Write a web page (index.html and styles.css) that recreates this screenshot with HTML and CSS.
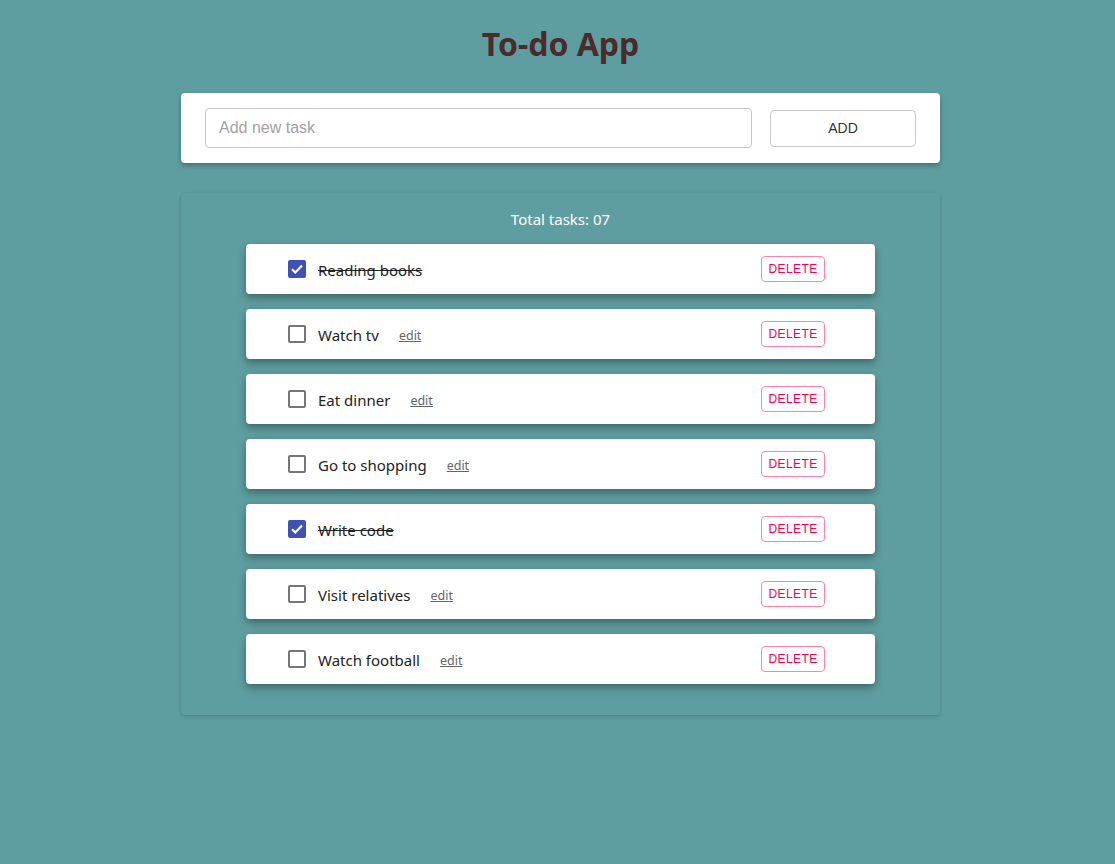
FILE: index.html
```html
<!DOCTYPE html>
<html>
<head>
<meta charset="utf-8">
<title>To-do App</title>
<link rel="stylesheet" href="styles.css">
</head>
<body>
<div class="app">
  <h1 class="title">To-do App</h1>
  <div class="add-card">
    <input class="task-input" type="text" placeholder="Add new task">
    <button class="add-btn">ADD</button>
  </div>
  <div class="list-card">
    <div class="total">Total tasks: 07</div>
    <div class="items">
      <div class="item">
        <span class="cb checked"><svg viewBox="0 0 18 18" width="18" height="18"><path d="M4 9.2l3.3 3.2L14 5.6" fill="none" stroke="#fff" stroke-width="2.2"/></svg></span>
        <span class="label done">Reading books</span>
        <button class="del-btn">DELETE</button>
      </div>
      <div class="item">
        <span class="cb"></span>
        <span class="label">Watch tv</span><a class="edit">edit</a>
        <button class="del-btn">DELETE</button>
      </div>
      <div class="item">
        <span class="cb"></span>
        <span class="label">Eat dinner</span><a class="edit">edit</a>
        <button class="del-btn">DELETE</button>
      </div>
      <div class="item">
        <span class="cb"></span>
        <span class="label">Go to shopping</span><a class="edit">edit</a>
        <button class="del-btn">DELETE</button>
      </div>
      <div class="item">
        <span class="cb checked"><svg viewBox="0 0 18 18" width="18" height="18"><path d="M4 9.2l3.3 3.2L14 5.6" fill="none" stroke="#fff" stroke-width="2.2"/></svg></span>
        <span class="label done">Write code</span>
        <button class="del-btn">DELETE</button>
      </div>
      <div class="item">
        <span class="cb"></span>
        <span class="label">Visit relatives</span><a class="edit">edit</a>
        <button class="del-btn">DELETE</button>
      </div>
      <div class="item">
        <span class="cb"></span>
        <span class="label">Watch football</span><a class="edit">edit</a>
        <button class="del-btn">DELETE</button>
      </div>
    </div>
  </div>
</div>
</body>
</html>
```

FILE: styles.css
```css
* { box-sizing: border-box; }
html, body { margin: 0; padding: 0; }
body {
  background: #5f9ea0;
  font-family: "Noto Sans", "Open Sans", sans-serif;
  min-height: 864px;
}
.app {
  width: 759px;
  margin: 0 auto;
  padding-top: 22px;
  position: relative;
  left: 3px;
}
.title {
  margin: 0 0 22px;
  text-align: center;
  font-size: 32px;
  font-weight: 700;
  color: #4b2b2b;
  line-height: 44px;
  height: 49px;
}
.add-card {
  background: #fff;
  border-radius: 4px;
  height: 70px;
  display: flex;
  align-items: center;
  padding: 0 24px;
  box-shadow: 0 2px 4px rgba(0,0,0,0.2), 0 3px 6px rgba(0,0,0,0.12);
  margin-bottom: 30px;
}
.task-input {
  width: 547px;
  height: 40px;
  border: 1px solid #c4c4c4;
  border-radius: 4px;
  padding: 0 13px;
  font-family: "Liberation Sans", Arial, sans-serif;
  font-size: 16px;
  color: #333;
  outline: none;
}
.task-input::placeholder { color: #a2a2a2; }
.add-btn {
  margin-left: 18px;
  width: 146px;
  height: 37px;
  background: #fff;
  border: 1px solid #c8c8c8;
  border-radius: 4px;
  font-family: "Liberation Sans", Arial, sans-serif;
  font-size: 14px;
  color: #333;
}
.list-card {
  border-radius: 4px;
  box-shadow: 0 1px 3px rgba(0,0,0,0.14), 0 2px 4px rgba(0,0,0,0.08);
  padding: 16px 65px 31px;
}
.total {
  text-align: center;
  color: #fff;
  font-size: 15px;
  line-height: 20px;
  margin-bottom: 15px;
}
.items {
  display: flex;
  flex-direction: column;
  gap: 15px;
}
.item {
  background: #fff;
  height: 50px;
  border-radius: 4px;
  display: flex;
  align-items: center;
  padding: 0 50px 0 42px;
  box-shadow: 0 3px 6px rgba(0,0,0,0.25), 0 6px 12px rgba(0,0,0,0.12);
}
.cb {
  width: 18px;
  height: 18px;
  border: 2px solid #767676;
  border-radius: 2px;
  flex: none;
  margin-right: 12px;
  position: relative;
  top: 0;
}
.cb.checked {
  border: none;
  background: #3f51b5;
}
.cb svg { display: block; }
.label {
  font-size: 15px;
  color: #222;
  position: relative;
  top: 1px;
}
.label.done { text-decoration: line-through; }
.edit {
  margin-left: 20px;
  font-size: 12.5px;
  color: #666;
  text-decoration: underline;
  position: relative;
  top: 1px;
}
.del-btn {
  margin-left: auto;
  width: 64px;
  height: 26px;
  background: #fff;
  border: 1px solid #ff82ac;
  border-radius: 4px;
  color: #f50057;
  font-family: "Liberation Sans", Arial, sans-serif;
  font-size: 12px;
  letter-spacing: 0.4px;
  padding: 0;
}
```
